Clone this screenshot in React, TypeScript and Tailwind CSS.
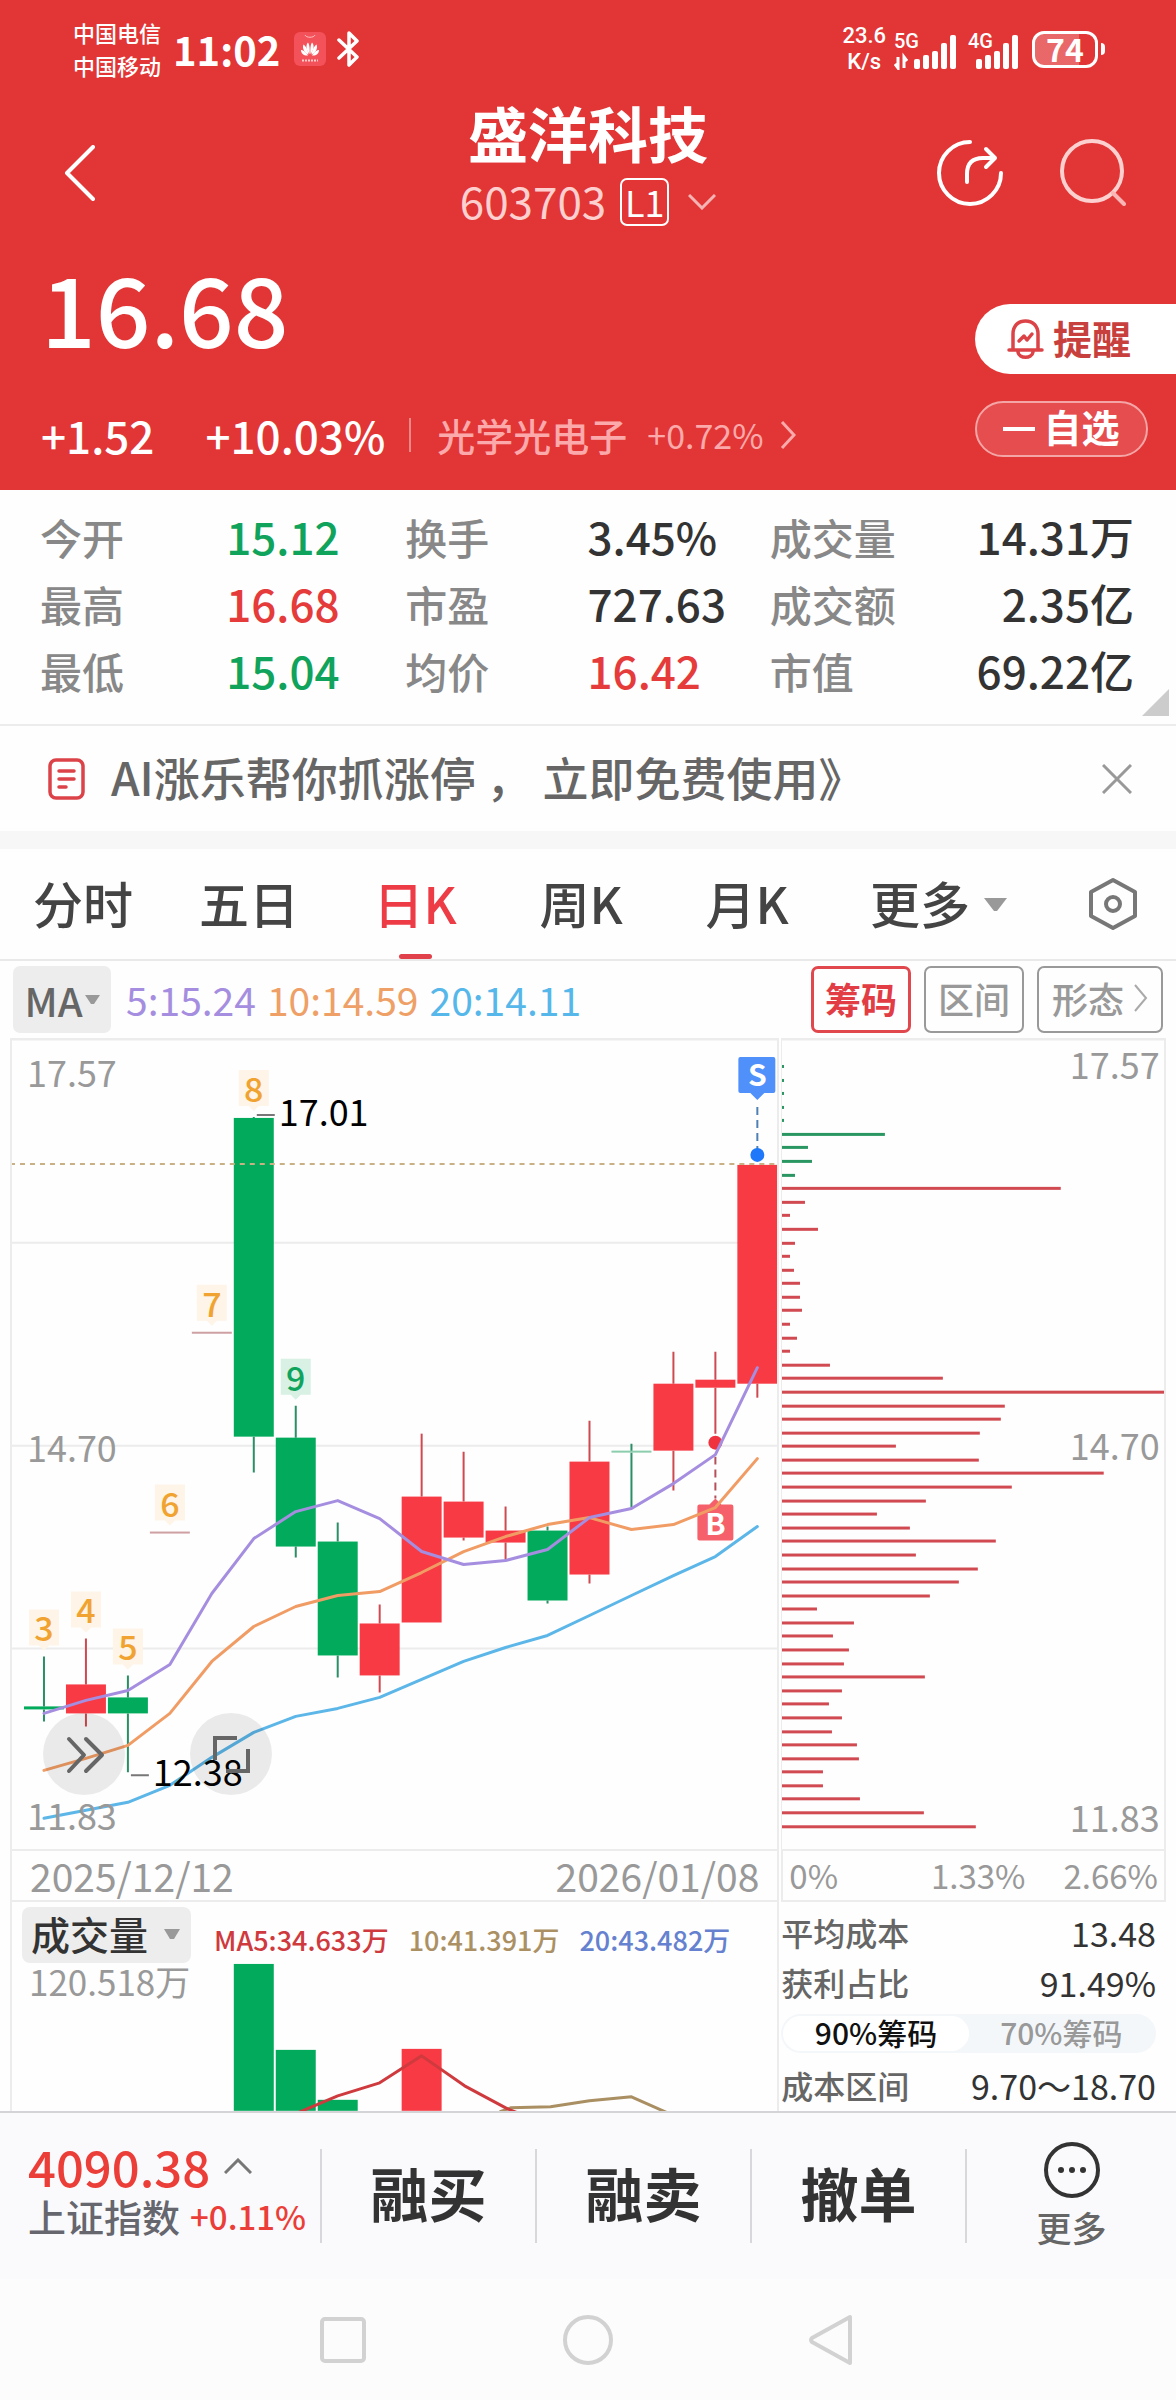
import React, { useState } from "react";

type Candle = {
  top: number;
  bottom: number;
  high: number;
  low: number;
  tone: "up" | "down" | "flat" | "thin";
};

// Candle geometry, top-left of the price panel is 0,0
const candles: Candle[] = [
  { top: 669, bottom: 672, high: 619, low: 684, tone: "down" },
  { top: 647, bottom: 676, high: 601, low: 689, tone: "up" },
  { top: 660, bottom: 676, high: 638, low: 735, tone: "down" },
  { top: 494, bottom: 496, high: 494, low: 496, tone: "flat" },
  { top: 294, bottom: 296, high: 294, low: 296, tone: "flat" },
  { top: 80, bottom: 399, high: 79, low: 435, tone: "down" },
  { top: 400, bottom: 509, high: 368, low: 520, tone: "down" },
  { top: 504, bottom: 618, high: 485, low: 640, tone: "down" },
  { top: 586, bottom: 638, high: 567, low: 655, tone: "up" },
  { top: 459, bottom: 585, high: 396, low: 585, tone: "up" },
  { top: 464, bottom: 500, high: 414, low: 503, tone: "up" },
  { top: 493, bottom: 505, high: 469, low: 523, tone: "up" },
  { top: 493, bottom: 563, high: 489, low: 566, tone: "down" },
  { top: 424, bottom: 537, high: 383, low: 546, tone: "up" },
  { top: 413, bottom: 415, high: 406, low: 470, tone: "thin" },
  { top: 346, bottom: 413, high: 314, low: 453, tone: "up" },
  { top: 342, bottom: 350, high: 314, low: 396, tone: "up" },
  { top: 127, bottom: 346, high: 127, low: 360, tone: "up" },
];

const ma5 = [676, 663, 653, 627, 556, 501, 474, 463, 481, 514, 527, 523, 512, 480, 471, 446, 417, 330];
const ma10 = [733, 721, 708, 676, 624, 589, 569, 558, 554, 535, 514, 499, 487, 480, 492, 487, 470, 421];
const ma20 = [781, 773, 765, 748, 720, 695, 679, 671, 660, 642, 624, 610, 598, 578, 558, 538, 519, 489];

const counts = [
  { i: 0, n: 3, y: 572 },
  { i: 1, n: 4, y: 554 },
  { i: 2, n: 5, y: 591 },
  { i: 3, n: 6, y: 447 },
  { i: 4, n: 7, y: 247 },
  { i: 5, n: 8, y: 32 },
  { i: 6, n: 9, y: 321 },
];

const chips = [
  2, 2, 2, 2, 2, 103, 26, 30, 13, 279, 23, 8, 36, 13, 8, 12, 18, 18, 20, 8, 15, 8, 48, 161, 384, 223, 219, 198, 114,
  197, 322, 230, 144, 95, 128, 214, 134, 196, 177, 148, 35, 72, 51, 67, 62, 143, 60, 47, 60, 50, 75, 77, 41, 41, 78,
  142, 194,
];

const UP = "#f73a44";
const DOWN = "#02aa5b";

const wickColor = { up: "#cf4a50", down: "#2a8f66", flat: "#cfa0a3", thin: "#2a8f66" };
const bodyColor = { up: UP, down: DOWN, flat: "#cfa0a3", thin: "#8ccdae" };

const cx = (i: number) => 34 + i * 42;
const toPoints = (values: number[]) => values.map((y, i) => `${cx(i)},${y}`).join(" ");

const stats = [
  ["今开", "15.12", "text-[#10a35c]", "换手", "3.45%", "text-[#333]", "成交量", "14.31万"],
  ["最高", "16.68", "text-[#e53b3b]", "市盈", "727.63", "text-[#333]", "成交额", "2.35亿"],
  ["最低", "15.04", "text-[#10a35c]", "均价", "16.42", "text-[#e53b3b]", "市值", "69.22亿"],
];

const App: React.FC = () => {
  return (
    <main className="w-full bg-[#fefefe] font-['Noto_Sans_CJK_SC',sans-serif] text-[#333]">
      <header className="bg-[#e23536] text-white">
        <StatusBar />
        <TitleBar />
        <PriceSummary />
      </header>
      <StatsGrid />
      <Banner />
      <PeriodTabs />
      <IndicatorRow />
      <section className="grid grid-cols-[2fr_1fr] gap-[2px] px-[10px]">
        <div className="border-x-2 border-[#ececec]">
          <PriceChart />
          <div className="flex h-[53px] items-center justify-between border-y-2 border-[#ececec] px-[18px] text-[39px] leading-none text-[#999]">
            <span>2025/12/12</span>
            <span>2026/01/08</span>
          </div>
          <VolumeChart />
        </div>
        <div>
          <ChipChart />
          <div className="flex h-[53px] items-center border-2 border-[#ececec] px-[6px] text-[33px] leading-none text-[#999]">
            <span className="flex-1">0%</span>
            <span className="mr-[38px]">1.33%</span>
            <span>2.66%</span>
          </div>
          <ChipStats />
        </div>
      </section>
      <BottomBar />
      <SystemNav />
    </main>
  );
};

export default App;

const StatusBar: React.FC = () => (
  <div className="flex h-[98px] items-center justify-between pr-[71px] pl-[73px]">
    <div className="flex items-center">
      <div className="text-[22px] leading-[33px] font-medium">
        <div>中国电信</div>
        <div>中国移动</div>
      </div>
      <span className="ml-[12px] text-[40px] leading-none font-bold">11:02</span>
      <svg className="ml-[14px] h-[34px] w-[32px]" viewBox="0 0 32 34">
        <rect width="32" height="34" rx="6" fill="#f4525a" />
        <path d="M11 3c1 3 9 3 10 0" fill="none" stroke="#fbb" strokeWidth="1" />
        <g fill="#fff">
          <path d="M15.500 22C12 18 11.500 13 14 10.500c1.500 2 2 7 1.500 11.500Z" />
          <path d="M16.500 22c3.500-4 4-9 1.500-11.500-1.500 2-2 7-1.500 11.500Z" />
          <path d="M14.500 22.500C10 20.500 8 16 9.500 12.500c2.500 1.500 4.500 6 5 10Z" />
          <path d="M17.500 22.500c4.500-2 6.500-6.500 5-10-2.500 1.500-4.500 6-5 10Z" />
          <path d="M14 23.500c-4 .5-7-2-7-5.500 2.500 0 5.500 2.500 7 5.500Z" />
          <path d="M18 23.500c4 .5 7-2 7-5.500-2.500 0-5.500 2.500-7 5.500Z" />
        </g>
        <path d="M8 28.500h16" stroke="#fcc" strokeWidth="2" strokeDasharray="2 1" />
      </svg>
      <svg className="ml-[11px] h-[36px] w-[24px]" viewBox="0 0 24 36" fill="none" stroke="#fff" strokeWidth="3.500" strokeLinecap="round" strokeLinejoin="round">
        <path d="M2 9l18 17-8 8V2l8 8L2 27" />
      </svg>
    </div>
    <div className="flex items-center">
      <div className="text-center font-[Roboto,sans-serif] text-[22px] leading-[26px] font-medium">
        <div>23.6</div>
        <div>K/s</div>
      </div>
      <SignalBars label="5G" data />
      <SignalBars label="4G" />
      <div className="ml-[12px] flex h-[37px] w-[66px] items-center justify-center rounded-[12px] border-[3px] border-white bg-linear-to-r from-white/25 from-74% to-transparent to-74% pb-[2px] text-[32px] leading-none font-bold">
        74
      </div>
      <span className="ml-[3px] h-[12px] w-[4px] rounded-r-full bg-white" />
    </div>
  </div>
);

const SignalBars: React.FC<{ label: string; data?: boolean }> = ({ label, data }) => (
  <svg className={data ? "ml-[8px] h-[42px] w-[64px]" : "ml-[10px] h-[42px] w-[52px]"} viewBox={data ? "0 -6 64 42" : "0 -6 52 42"} fill="#fff">
    <text x="0" y="14" fontSize="20" fontFamily="Roboto, sans-serif" fontWeight="500">
      {label}
    </text>
    {data && <path d="M4 23v11l-3-4M10 34V23l3 4" fill="none" stroke="#fff" strokeWidth="3" />}
    {[10, 14, 18, 26, 34].map((h, i) => (
      <rect key={h} x={(data ? 20 : 8) + i * 9} y={35 - h} width="6" height={h} rx="2" />
    ))}
  </svg>
);

const TitleBar: React.FC = () => (
  <div className="flex h-[150px] justify-between px-[50px]">
    <button type="button" aria-label="返回" className="flex w-[190px] items-center pl-[14px]">
      <svg className="h-[56px] w-[32px]" viewBox="0 0 32 56" fill="none" stroke="#fff" strokeWidth="4" strokeLinecap="round" strokeLinejoin="round">
        <path d="M29 2L3 28l26 26" />
      </svg>
    </button>
    <div className="flex flex-col items-center">
      <h1 className="text-[60px] leading-[68px] font-bold">盛洋科技</h1>
      <button type="button" className="mt-[12px] flex items-center">
        <span className="-mt-[4px] text-[44px] leading-[48px] text-[#fdcfcf]">603703</span>
        <span className="ml-[14px] flex h-[48px] w-[49px] items-center justify-center rounded-[7px] border-2 border-white pb-[2px] text-[36px] leading-none">
          L1
        </span>
        <svg className="ml-[19px] h-[16px] w-[28px]" viewBox="0 0 28 16" fill="none" stroke="#f5b4b4" strokeWidth="3">
          <path d="M1 1l13 13L27 1" />
        </svg>
      </button>
    </div>
    <div className="flex w-[190px] items-center justify-between">
      <button type="button" aria-label="分享">
        <svg className="h-[68px] w-[68px]" viewBox="0 0 68 68" fill="none" stroke="#fff" strokeWidth="4" strokeLinecap="round" strokeLinejoin="round">
          <path d="M34 3A31 31 0 1 0 65 34" />
          <path d="M31 43v-8c0-11 6-16 16-16h12M50 10l9 9-9 9" />
        </svg>
      </button>
      <button type="button" aria-label="搜索">
        <svg className="h-[68px] w-[68px]" viewBox="0 0 68 68" fill="none" stroke="#fdd0d0" strokeWidth="4" strokeLinecap="round">
          <circle cx="34" cy="32" r="30" />
          <path d="M55 54l11 11" stroke="#fbb5b5" />
        </svg>
      </button>
    </div>
  </div>
);

const PriceSummary: React.FC = () => (
  <div className="flex justify-between pb-[19px] pl-[41px]">
    <div>
      <div className="mt-[11px] text-[96px] leading-[96px] font-medium">16.68</div>
      <div className="mt-[44px] flex h-[72px] items-center text-[44px] leading-none font-medium">
        <span>+1.52</span>
        <span className="ml-[51px]">+10.03%</span>
        <span className="ml-[24px] h-[34px] w-[2px] bg-[#f08888]" />
        <a href="#sector" className="ml-[26px] flex items-center text-[38px] text-[#fba9aa]">
          光学光电子
          <span className="ml-[20px] text-[34px] font-normal">+0.72%</span>
          <svg className="ml-[16px] h-[28px] w-[16px]" viewBox="0 0 16 28" fill="none" stroke="#fba9aa" strokeWidth="3">
            <path d="M2 1l12 13L2 27" />
          </svg>
        </a>
      </div>
    </div>
    <div className="flex w-[201px] flex-col pt-[56px]">
      <button type="button" className="flex h-[70px] w-full items-center rounded-l-full bg-white pb-[4px] pl-[32px] text-[39px] leading-none font-bold text-[#c8403d]">
        <svg className="mt-[4px] mr-[9px] h-[40px] w-[37px]" viewBox="0 0 37 40" fill="none" stroke="#dc4347" strokeWidth="3.500" strokeLinecap="round" strokeLinejoin="round">
          <path d="M6 30V15C6 7 11 2 18.500 2S31 7 31 15v15M2 31h33M11 33c1 7 14 7 15 0" />
          <path d="M12 22l5-5 3 4 5-6" />
        </svg>
        提醒
      </button>
      <button type="button" className="mt-[27px] flex h-[56px] w-[173px] items-center justify-center rounded-full border-2 border-[#f4a5a5] bg-white/12 pb-[6px] text-[38px] leading-none font-bold">
        <span className="mt-[6px] mr-[8px] h-[4px] w-[32px] bg-white" />
        自选
      </button>
    </div>
  </div>
);

const StatsGrid: React.FC = () => (
  <section className="relative border-b-2 border-[#ececec] pt-[13px] pb-[20px]">
    <dl className="grid grid-cols-[186fr_179fr_182fr_182fr_182fr_182fr] pr-[42px] pl-[40px] text-[44px] leading-[67px] font-medium whitespace-nowrap">
      {stats.map(([l1, v1, c1, l2, v2, c2, l3, v3]) => (
        <React.Fragment key={l1}>
          <dt className="text-[42px] text-[#888]">{l1}</dt>
          <dd className={c1}>{v1}</dd>
          <dt className="text-[42px] text-[#888]">{l2}</dt>
          <dd className={c2}>{v2}</dd>
          <dt className="text-[42px] text-[#888]">{l3}</dt>
          <dd className="flex justify-end">{v3}</dd>
        </React.Fragment>
      ))}
    </dl>
    <svg className="absolute right-[7px] bottom-[8px] h-[27px] w-[27px]" viewBox="0 0 27 27">
      <path d="M27 0v27H0Z" fill="#ccc" />
    </svg>
  </section>
);

const Banner: React.FC = () => (
  <section className="flex h-[123px] items-center border-b-[18px] border-[#f7f7f7] pr-[44px] pl-[48px]">
    <svg className="h-[42px] w-[37px]" viewBox="0 0 37 42" fill="none" stroke="#dc4349" strokeLinecap="round">
      <rect x="2" y="2" width="33" height="38" rx="6" strokeWidth="3.500" />
      <path d="M11 13h15M11 21h15M11 29h7" strokeWidth="3.500" />
    </svg>
    <a href="#ai" className="ml-[26px] flex-1 pb-[5px] text-[46px] leading-none font-medium text-[#666]">
      AI涨乐帮你抓涨停 ， 立即免费使用》
    </a>
    <button type="button" aria-label="关闭">
      <svg className="h-[30px] w-[30px]" viewBox="0 0 30 30" fill="none" stroke="#999" strokeWidth="3">
        <path d="M1 1l28 28M29 1L1 29" />
      </svg>
    </button>
  </section>
);

const periods = ["分时", "五日", "日K", "周K", "月K"];

const PeriodTabs: React.FC = () => {
  const [active, setActive] = useState("日K");
  return (
    <nav className="grid h-[112px] grid-cols-[repeat(6,166fr)_180fr] border-b-2 border-[#e9e9e9] text-[50px] leading-none font-medium text-[#444]">
      {periods.map((p) => (
        <button
          key={p}
          type="button"
          onClick={() => setActive(p)}
          className={`relative flex items-center justify-center pb-[5px] ${active === p ? "text-[#ee3c46]" : ""}`}
        >
          {p}
          {active === p && <span className="absolute bottom-0 h-[5px] w-[33px] rounded-full bg-[#e0414a]" />}
        </button>
      ))}
      <button type="button" className="flex min-w-0 items-center pb-[5px] pl-[40px] whitespace-nowrap">
        更多
        <svg className="mt-[5px] ml-[14px] h-[15px] w-[23px] shrink-0" viewBox="0 0 23 15">
          <path d="M0 1h23L13 14h-3Z" fill="#999" />
        </svg>
      </button>
      <button type="button" aria-label="设置" className="flex items-center justify-end pr-[38px]">
        <svg className="h-[54px] w-[50px]" viewBox="0 0 50 54" fill="none" stroke="#777" strokeWidth="4" strokeLinejoin="round">
          <path d="M25 3l22 12v24L25 51 3 39V15Z" />
          <circle cx="25" cy="27" r="7" />
        </svg>
      </button>
    </nav>
  );
};

const IndicatorRow: React.FC = () => (
  <div className="flex h-[77px] items-start pt-[5px] pr-[13px] pl-[13px] text-[39px] leading-none">
    <button type="button" className="flex h-[67px] w-[98px] items-center justify-center gap-[2px] rounded-[7px] bg-[#ededed] text-[40px] font-medium text-[#666]">
      MA
      <svg className="h-[9px] w-[15px] shrink-0" viewBox="0 0 15 9">
        <path d="M0 0h15L9 9H6Z" fill="#999" />
      </svg>
    </button>
    <div className="flex h-[67px] flex-1 items-center gap-[11px] pl-[15px]">
      <span className="text-[#a58ee0]">5:15.24</span>
      <span className="text-[#eea067]">10:14.59</span>
      <span className="text-[#56b7ea]">20:14.11</span>
    </div>
    <div className="flex h-[67px] items-stretch gap-[13px] text-[36px]">
      <button type="button" className="w-[100px] rounded-[7px] border-[3px] border-[#e0484e] pb-[3px] font-bold text-[#e23c45]">
        筹码
      </button>
      <button type="button" className="w-[100px] rounded-[7px] border-2 border-[#999] pb-[3px] font-medium text-[#999]">
        区间
      </button>
      <button type="button" className="flex w-[126px] items-center justify-center gap-[10px] rounded-[7px] border-2 border-[#999] pb-[3px] font-medium text-[#999]">
        形态
        <svg className="h-[28px] w-[14px]" viewBox="0 0 14 28" fill="none" stroke="#aaa" strokeWidth="2">
          <path d="M1 1l11 13L1 27" />
        </svg>
      </button>
    </div>
  </div>
);

const PriceChart: React.FC = () => (
  <div className="relative">
    <svg className="block w-full" viewBox="2 0 766 812" fontFamily="'Noto Sans CJK SC', sans-serif">
      <path d="M0 1h770" stroke="#ececec" strokeWidth="3" />
      <path d="M0 205h770M0 408h770M0 611h770" stroke="#ececec" strokeWidth="2" />
      {candles.map((c, i) => (
        <g key={i}>
          <rect x={cx(i) - 20} y={c.top} width="40" height={c.bottom - c.top} fill={bodyColor[c.tone]} />
          {c.tone !== "flat" && (
            <path d={`M${cx(i)} ${c.high}V${c.top}M${cx(i)} ${c.bottom}V${c.low}`} stroke={wickColor[c.tone]} strokeWidth="2" />
          )}
        </g>
      ))}
      <path d="M0 126h770" stroke="#c9b085" strokeWidth="2" strokeDasharray="5 5" />
      <path d="M748 69v42" stroke="#4f80b4" strokeWidth="2" strokeDasharray="8 5" />
      <circle cx="748" cy="117" r="7" fill="#1f78fa" />
      <circle cx="706" cy="405" r="7" fill="#f0323f" />
      <path d="M706 419v42" stroke="#b5505a" strokeWidth="2" strokeDasharray="8 5" />
      <path d="M690 467h10l6-6 6 6h10q2 0 2 2v32q0 2-2 2h-32q-2 0-2-2v-32q0-2 2-2Z" fill="#f5606a" />
      <g fill="none" strokeWidth="3" strokeLinejoin="round" strokeLinecap="round">
        <polyline points={toPoints(ma20)} stroke="#5cb6e8" />
        <polyline points={toPoints(ma10)} stroke="#f09c64" />
        <polyline points={toPoints(ma5)} stroke="#a58ee0" />
      </g>
      <path d="M731 19h33q2 0 2 2v32q0 2-2 2h-9l-7 7-7-7h-10q-2 0-2-2V21q0-2 2-2Z" fill="#5090fb" />
      <g fill="#fff" fontSize="30" fontWeight="700" textAnchor="middle">
        <text x="748" y="48">S</text>
        <text x="706" y="497">B</text>
      </g>
      {counts.map(({ i, n, y }) => (
        <g key={n}>
          <path
            d={`M${cx(i) - 15} ${y}h30v36h-10l-5 5l-5 -5h-10Z`}
            fill={n === 9 ? "#d8f1e4" : "#fef4e7"}
          />
          <text x={cx(i)} y={y + 32} fontSize="34" fontWeight="500" textAnchor="middle" fill={n === 9 ? "#10a35c" : "#f0a330"}>
            {n}
          </text>
        </g>
      ))}
      <path d="M247 77h18M121 738h18" stroke="#777" strokeWidth="2" />
      <g fill="#999" fontSize="36">
        <text x="17" y="49">17.57</text>
        <text x="17" y="424">14.70</text>
        <text x="17" y="793">11.83</text>
      </g>
      <g fill="#000" fontSize="36">
        <text x="269" y="88">17.01</text>
        <text x="143" y="749">12.38</text>
      </g>
    </svg>
    <div className="absolute bottom-[54px] left-[31px] flex gap-[65px]">
      <button type="button" aria-label="快进" className="size-[82px] rounded-full bg-black/8">
        <svg viewBox="0 0 82 82" fill="none" stroke="#666" strokeWidth="4" strokeLinecap="round" strokeLinejoin="round">
          <path d="M26 26l15 16-15 16M43 26l16 16-16 16" />
        </svg>
      </button>
      <button type="button" aria-label="全屏" className="size-[82px] rounded-full bg-black/8">
        <svg viewBox="0 0 82 82" fill="none" stroke="#666" strokeWidth="4">
          <path d="M47 25H25v22M58 36v22H36" />
        </svg>
      </button>
    </div>
  </div>
);

const ChipChart: React.FC = () => (
  <div className="border-r-2 border-l border-[#ececec]">
    <svg className="block w-full" viewBox="0 0 382 812" fontFamily="'Noto Sans CJK SC', sans-serif">
      <path d="M0 1h384" stroke="#ececec" strokeWidth="3" />
      {chips.map((w, i) => (
        <rect key={i} x="0" y={Math.round(27 + i * 13.583)} width={w} height="3" fill={i < 9 ? "#2a9763" : "#d14a52"} />
      ))}
      <g fill="#999" fontSize="36" textAnchor="end">
        <text x="378" y="41">17.57</text>
        <text x="378" y="422">14.70</text>
        <text x="378" y="795">11.83</text>
      </g>
    </svg>
  </div>
);

const VolumeChart: React.FC = () => (
  <div className="relative">
    <svg className="block w-full" viewBox="2 0 766 209">
      <g fill={DOWN}>
        <rect x="224" y="62" width="40" height="147" />
        <rect x="266" y="148" width="40" height="61" />
        <rect x="308" y="198" width="40" height="11" />
      </g>
      <rect x="392" y="147" width="40" height="62" fill={UP} />
      <g fill="none" strokeWidth="3" strokeLinejoin="round">
        <polyline points="490,210 501,206 541,205 580,199 622,195 658,211" stroke="#a98f62" />
        <polyline points="288,211 328,194 370,181 412,154 455,184 498,207 508,211" stroke="#cf3a3e" />
      </g>
    </svg>
    <div className="absolute top-[5px] left-[10px] flex items-center gap-[20px] text-[27px] leading-none font-medium whitespace-nowrap">
      <button type="button" className="mr-[3px] flex h-[56px] w-[169px] items-center gap-[16px] rounded-[8px] bg-[#ededed] pb-[3px] pl-[9px] text-[39px] text-[#333]">
        成交量
        <svg className="h-[10px] w-[16px]" viewBox="0 0 16 10">
          <path d="M0 0h16l-6 10H6Z" fill="#999" />
        </svg>
      </button>
      <span className="pt-[8px] text-[#cf3a3e]">MA5:34.633万</span>
      <span className="pt-[8px] text-[#ab9064]">10:41.391万</span>
      <span className="pt-[8px] text-[#6581cf]">20:43.482万</span>
    </div>
    <span className="absolute top-[61px] left-[17px] text-[35px] leading-[36px] text-[#999]">120.518万</span>
  </div>
);

const ChipStats: React.FC = () => {
  const [range, setRange] = useState("90%筹码");
  return (
    <div className="pt-[4px] pr-[10px] text-[34px] leading-[47px] text-[#333]">
      <Row label="平均成本" value="13.48" />
      <Row label="获利占比" value="91.49%" />
      <div className="mt-[8px] mb-[6px] flex h-[39px] rounded-full bg-[#f4f7fa] p-[2px] text-[30px] leading-none">
        {["90%筹码", "70%筹码"].map((r) => (
          <button
            key={r}
            type="button"
            onClick={() => setRange(r)}
            className={`flex-1 rounded-full pb-[3px] font-medium ${range === r ? "bg-white text-[#111]" : "text-[#999]"}`}
          >
            {r}
          </button>
        ))}
      </div>
      <Row label="成本区间" value="9.70～18.70" />
    </div>
  );
};

const Row: React.FC<{ label: string; value: string }> = ({ label, value }) => (
  <dl className="flex items-center justify-between pt-[3px] whitespace-nowrap">
    <dt className="text-[32px] font-medium text-[#666]">{label}</dt>
    <dd>{value}</dd>
  </dl>
);

const BottomBar: React.FC = () => (
  <footer className="grid h-[168px] grid-cols-[320fr_215fr_215fr_215fr_211fr] items-center border-t-2 border-[#d4d4d8] bg-[#fafafc]">
    <a href="#index" className="pb-[10px] pl-[28px] whitespace-nowrap">
      <div className="flex items-center text-[49px] leading-[50px] font-medium text-[#ec3e38]">
        4090.38
        <svg className="ml-[14px] h-[16px] w-[28px]" viewBox="0 0 28 16" fill="none" stroke="#777" strokeWidth="3">
          <path d="M1 15L14 2l13 13" />
        </svg>
      </div>
      <div className="flex items-center text-[38px] leading-[50px] font-medium text-[#66666e]">
        上证指数
        <span className="ml-[10px] text-[33px] text-[#ec3e38]">+0.11%</span>
      </div>
    </a>
    {["融买", "融卖", "撤单"].map((t) => (
      <button key={t} type="button" className="h-[94px] border-l-2 border-[#d8d8dc] pb-[8px] text-[58px] leading-none font-bold text-[#333]">
        {t}
      </button>
    ))}
    <button type="button" className="flex h-[94px] flex-col items-center justify-center gap-[4px] border-l-2 border-[#d8d8dc] text-[35px] leading-[48px] font-medium text-[#666]">
      <svg className="h-[58px] w-[58px] shrink-0" viewBox="0 0 58 58" fill="none" stroke="#333" strokeWidth="4">
        <circle cx="29" cy="29" r="26" />
        <g fill="#333" stroke="none">
          <circle cx="18" cy="29" r="3" />
          <circle cx="29" cy="29" r="3" />
          <circle cx="40" cy="29" r="3" />
        </g>
      </svg>
      更多
    </button>
  </footer>
);

const SystemNav: React.FC = () => (
  <div className="flex h-[122px] items-center justify-center gap-[194px] bg-[#fcfcfc]">
    <button type="button" aria-label="最近任务">
      <svg className="h-[52px] w-[50px]" viewBox="0 0 50 52" fill="none" stroke="#d2d2d2" strokeWidth="4">
        <rect x="4" y="5" width="42" height="42" rx="3" />
      </svg>
    </button>
    <button type="button" aria-label="主页">
      <svg className="h-[52px] w-[52px]" viewBox="0 0 52 52" fill="none" stroke="#d2d2d2" strokeWidth="4">
        <circle cx="26" cy="26" r="23" />
      </svg>
    </button>
    <button type="button" aria-label="返回上级">
      <svg className="h-[52px] w-[50px]" viewBox="0 0 50 52" fill="none" stroke="#d2d2d2" strokeWidth="4" strokeLinejoin="round">
        <path d="M42 3v46L4 28q-2-2 0-4Z" />
      </svg>
    </button>
  </div>
);
